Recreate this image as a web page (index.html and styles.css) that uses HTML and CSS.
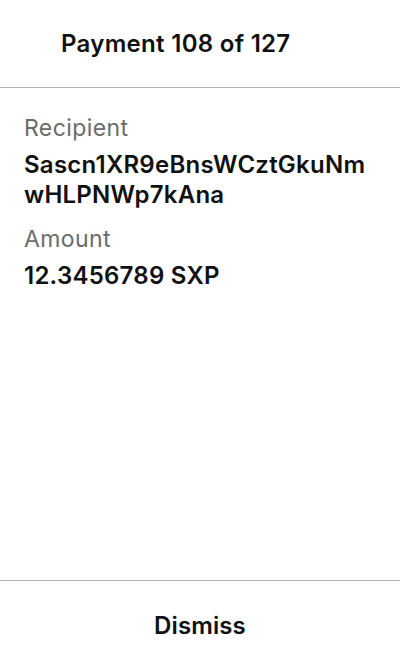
FILE: index.html
```html
<!DOCTYPE html>
<html>
<head>
<meta charset="utf-8">
<link rel="stylesheet" href="styles.css">
</head>
<body>
<div class="screen">
  <header class="header">
    <h1 class="title">Payment 108 of 127</h1>
  </header>
  <main class="content">
    <div class="field">
      <div class="label">Recipient</div>
      <div class="value address">Sascn1XR9eBnsWCztGkuNmwHLPNWp7kAna</div>
    </div>
    <div class="field">
      <div class="label">Amount</div>
      <div class="value">12.3456789 SXP</div>
    </div>
  </main>
  <footer class="footer">
    <button class="dismiss">Dismiss</button>
  </footer>
</div>
</body>
</html>
```
FILE: styles.css
```css
* { box-sizing: border-box; }
html, body { margin: 0; padding: 0; background: #fff; }
body { font-family: Inter, "Noto Sans", sans-serif; color: #111; }
.screen { width: 400px; height: 672px; display: flex; flex-direction: column; }
.header { height: 88px; border-bottom: 1px solid #b0b0b0; display: flex; align-items: center; padding-left: 61px; }
.title { margin: 0; font-size: 24px; font-weight: 600; line-height: 30px; letter-spacing: 0.3px; }
.content { flex: 1; padding: 25px 24px 0; display: flex; flex-direction: column; gap: 14px; }
.field { display: flex; flex-direction: column; gap: 7px; }
.label { font-size: 23px; line-height: 30px; color: #6b6b6b; letter-spacing: 0.4px; }
.value { font-size: 24px; line-height: 30px; font-weight: 600; color: #111; letter-spacing: 0.25px; }
.address { word-break: break-all; }
.footer { height: 92px; border-top: 1px solid #b0b0b0; display: flex; align-items: center; justify-content: center; padding-bottom: 3px; }
.dismiss { border: none; background: none; font-family: inherit; font-size: 24px; font-weight: 600; color: #111; padding: 0; letter-spacing: 0.1px; }
```
